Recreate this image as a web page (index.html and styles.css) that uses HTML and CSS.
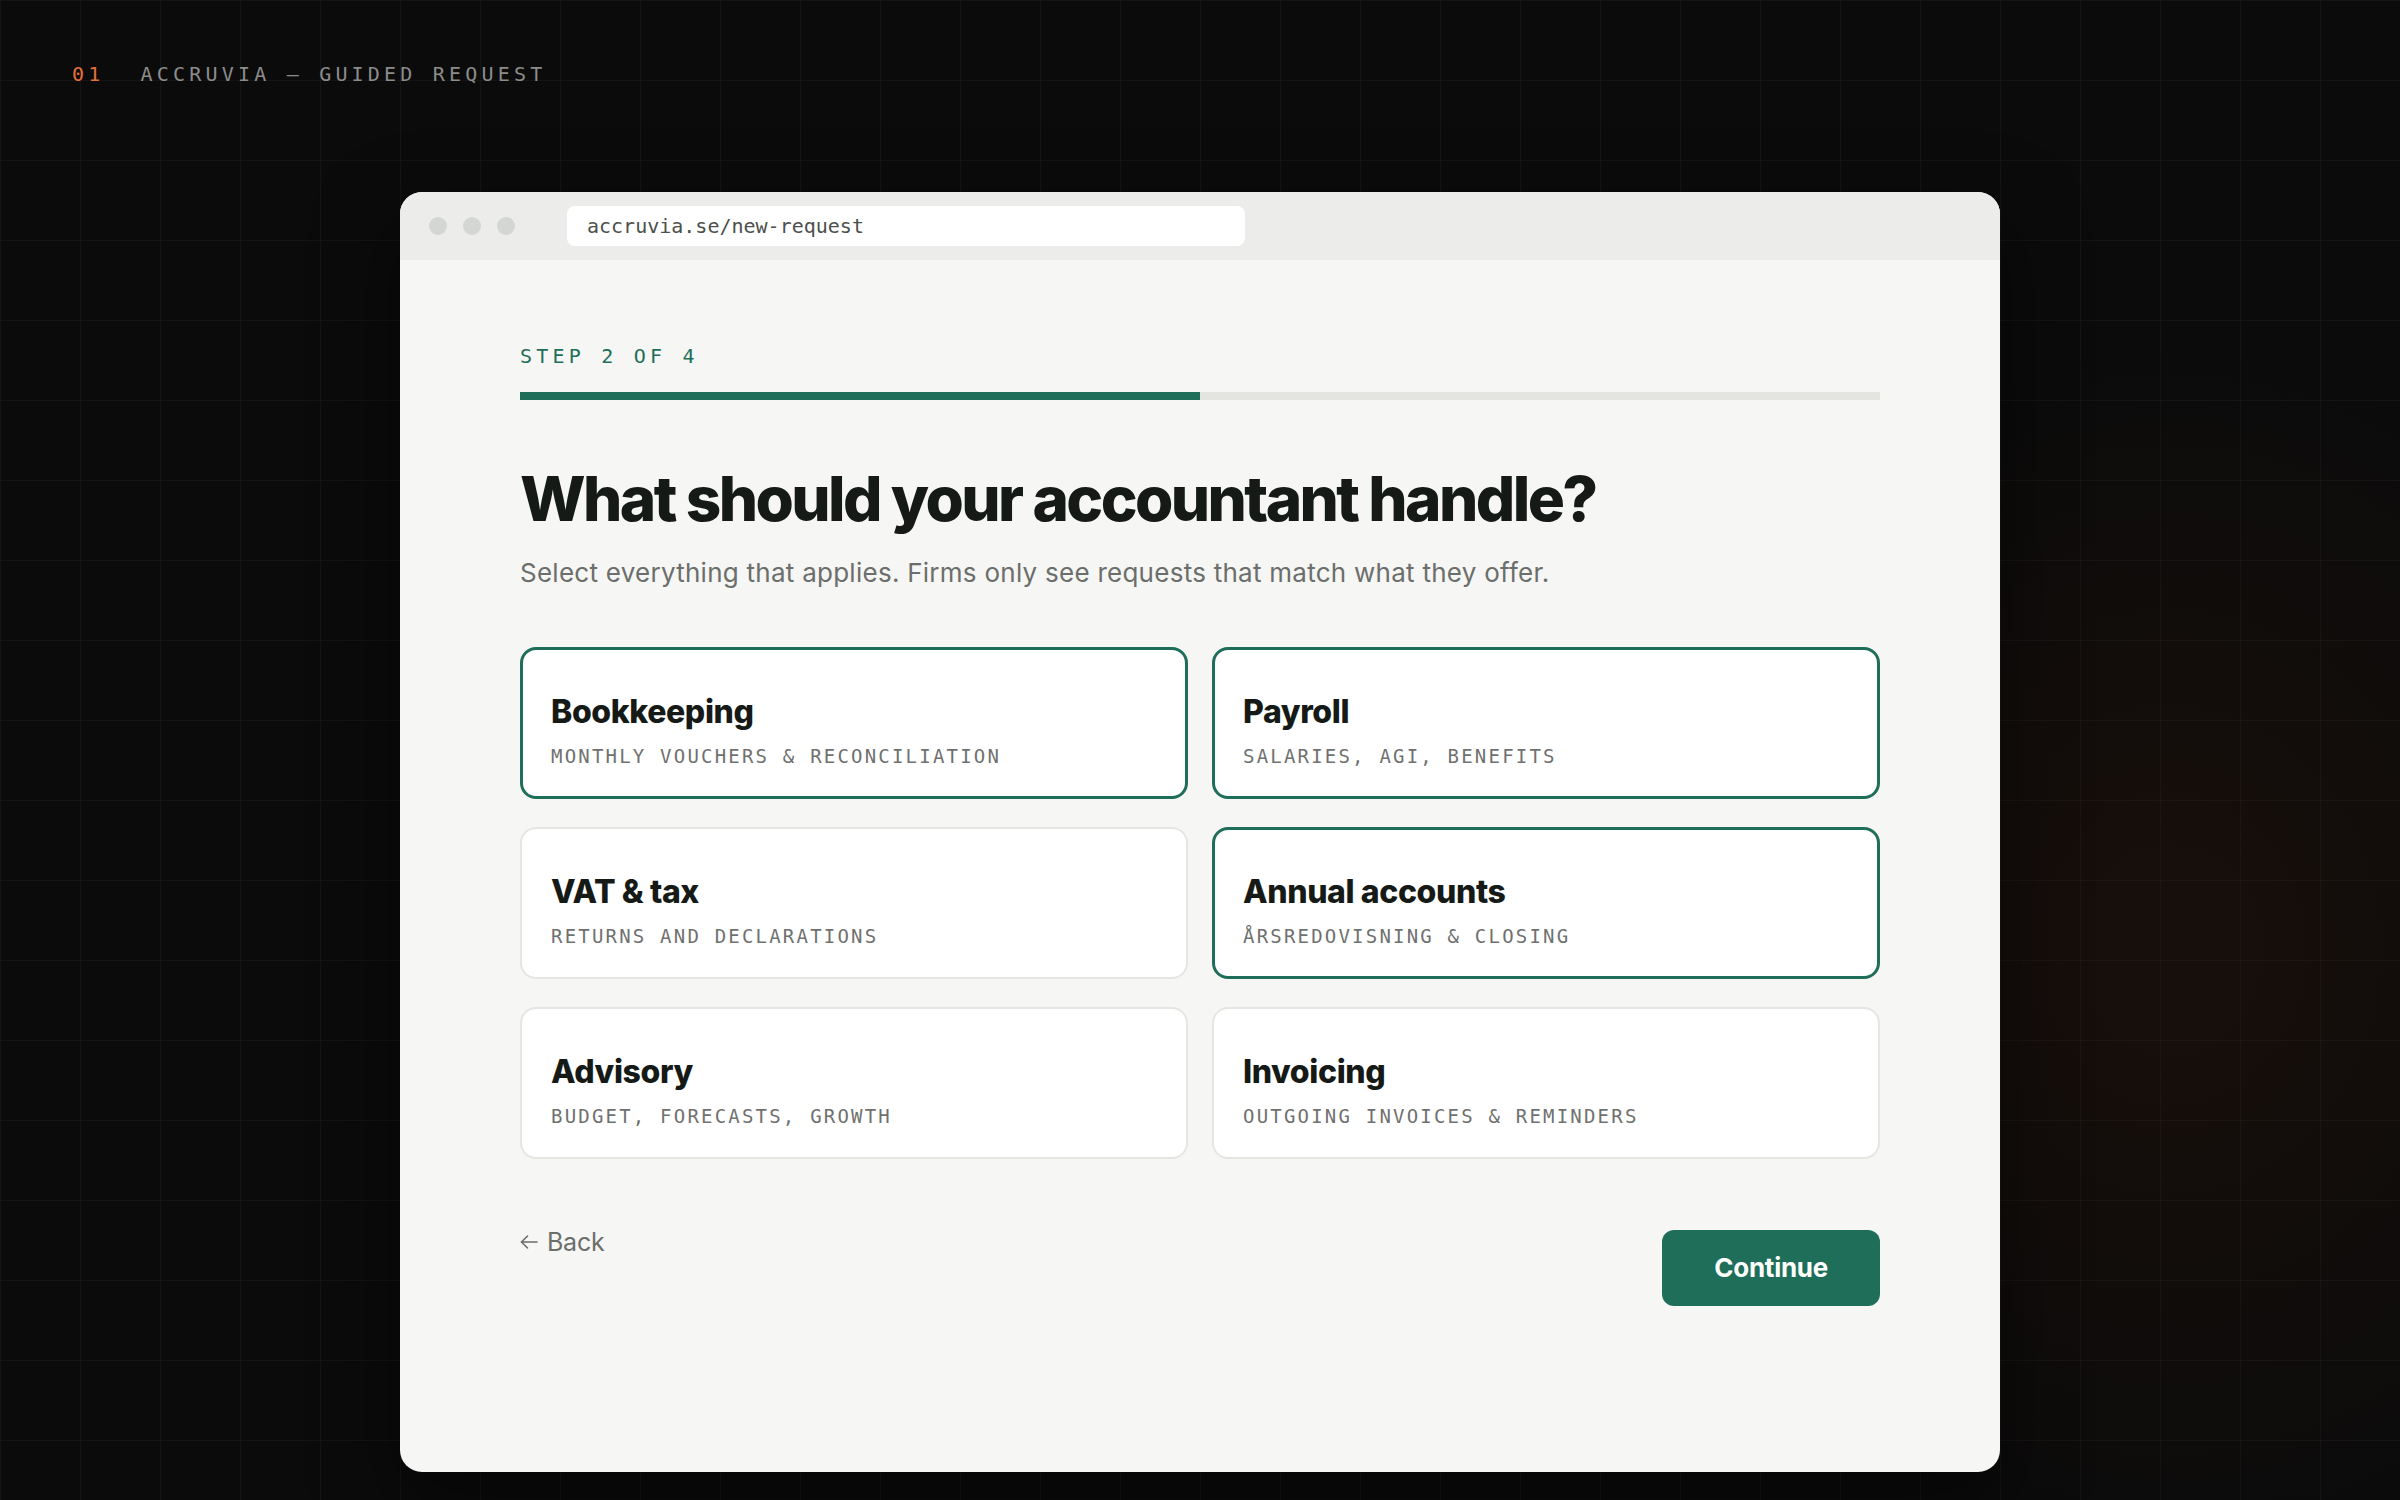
FILE: index.html
```html
<!DOCTYPE html>
<html lang="en">
<head>
    <meta charset="UTF-8">
    <meta name="viewport" content="width=device-width, initial-scale=1.0">
    <title>Accruvia - New request</title>
    <link rel="stylesheet" href="styles.css">
</head>
<body>
    <header class="topline">
        <span class="topline-num">01</span>
        <span class="topline-title">ACCRUVIA — GUIDED REQUEST</span>
    </header>

    <div class="browser">
        <div class="browser-bar">
            <div class="dots">
                <span class="dot"></span>
                <span class="dot"></span>
                <span class="dot"></span>
            </div>
            <div class="url">accruvia.se/new-request</div>
        </div>

        <main class="wizard">
            <div class="step-label">STEP 2 OF 4</div>
            <div class="progress">
                <div class="progress-fill" style="width: 50%"></div>
            </div>

            <h1 class="question">What should your accountant handle?</h1>
            <p class="hint">Select everything that applies. Firms only see requests that match what they offer.</p>

            <div class="options">
                <div class="option is-selected">
                    <div class="option-title">Bookkeeping</div>
                    <div class="option-sub">MONTHLY VOUCHERS &amp; RECONCILIATION</div>
                </div>
                <div class="option is-selected">
                    <div class="option-title">Payroll</div>
                    <div class="option-sub">SALARIES, AGI, BENEFITS</div>
                </div>
                <div class="option">
                    <div class="option-title">VAT &amp; tax</div>
                    <div class="option-sub">RETURNS AND DECLARATIONS</div>
                </div>
                <div class="option is-selected">
                    <div class="option-title">Annual accounts</div>
                    <div class="option-sub">ÅRSREDOVISNING &amp; CLOSING</div>
                </div>
                <div class="option">
                    <div class="option-title">Advisory</div>
                    <div class="option-sub">BUDGET, FORECASTS, GROWTH</div>
                </div>
                <div class="option">
                    <div class="option-title">Invoicing</div>
                    <div class="option-sub">OUTGOING INVOICES &amp; REMINDERS</div>
                </div>
            </div>

            <div class="wizard-footer">
                <a class="back" href="#">
                    <svg width="18" height="16" viewBox="0 0 18 16" fill="none" stroke="currentColor" stroke-width="1.6" stroke-linecap="round" stroke-linejoin="round">
                        <path d="M17 8H1.5"/>
                        <path d="M7.5 2L1.5 8l6 6"/>
                    </svg>
                    Back
                </a>
                <button class="continue" type="button">Continue</button>
            </div>
        </main>
    </div>
</body>
</html>
```

FILE: styles.css
```css
* {
    box-sizing: border-box;
}
body {
    margin: 0;
    min-height: 100vh;
    font-family: Inter, "Noto Sans", sans-serif;
    background-color: #0b0b0b;
    background-image:
        radial-gradient(ellipse 520px 600px at 2170px 950px, rgba(70, 30, 14, 0.22), transparent),
        linear-gradient(rgba(255, 255, 255, 0.035) 1px, transparent 1px),
        linear-gradient(90deg, rgba(255, 255, 255, 0.035) 1px, transparent 1px);
    background-size: auto, 80px 80px, 80px 80px;
    overflow: hidden;
}

/* slide label */
.topline {
    display: flex;
    align-items: center;
    padding: 62px 72px 0;
    height: 86px;
    font-family: "DejaVu Sans Mono", "Liberation Mono", monospace;
    font-size: 20px;
    line-height: 24px;
    letter-spacing: 4.2px;
}
.topline-num {
    color: #e3703a;
    margin-right: 36px;
}
.topline-title {
    color: #8c8c8a;
}

/* browser frame */
.browser {
    width: 1600px;
    height: 1280px;
    margin: 106px auto 0;
    background: #f6f6f4;
    border-radius: 22px;
    overflow: hidden;
    box-shadow: 0 30px 80px rgba(0, 0, 0, 0.5);
}
.browser-bar {
    height: 68px;
    background: #ecedea;
    display: flex;
    align-items: center;
    padding-left: 29px;
}
.dots {
    display: flex;
    gap: 16px;
}
.dot {
    width: 18px;
    height: 18px;
    border-radius: 50%;
    background: #d4d6d3;
}
.url {
    margin-left: 52px;
    width: 678px;
    height: 40px;
    background: #fff;
    border-radius: 8px;
    padding-left: 20px;
    display: flex;
    align-items: center;
    font-family: "DejaVu Sans Mono", "Liberation Mono", monospace;
    font-size: 20px;
    color: #4c4f4c;
}

/* wizard body */
.wizard {
    padding: 84px 120px 0;
}
.step-label {
    font-family: "DejaVu Sans Mono", "Liberation Mono", monospace;
    font-size: 20px;
    line-height: 24px;
    letter-spacing: 4.2px;
    color: #1e6e5a;
}
.progress {
    margin-top: 24px;
    height: 8px;
    background: #e4e4e1;
}
.progress-fill {
    height: 100%;
    background: #1e6e5a;
}
.question {
    margin: 65px 0 0;
    font-size: 62px;
    line-height: 1.1;
    font-weight: 800;
    letter-spacing: -0.042em;
    color: #161a17;
}
.hint {
    margin: 22px 0 0;
    font-size: 26px;
    line-height: 1.4;
    color: #6b6e6b;
    letter-spacing: 0.01em;
}

.options {
    margin-top: 55px;
    display: grid;
    grid-template-columns: 1fr 1fr;
    grid-auto-rows: 152px;
    column-gap: 24px;
    row-gap: 28px;
}
.option {
    background: #fff;
    border: 2px solid #e5e5e2;
    border-radius: 16px;
    padding: 45px 29px 0;
}
.option.is-selected {
    border: 3px solid #1e6e5a;
    padding: 44px 28px 0;
}
.option-title {
    font-size: 32px;
    line-height: 36px;
    font-weight: 800;
    letter-spacing: -0.012em;
    color: #161a17;
}
.option-sub {
    margin-top: 15px;
    font-family: "DejaVu Sans Mono", "Liberation Mono", monospace;
    font-size: 19px;
    line-height: 23px;
    letter-spacing: 2.2px;
    color: #6f716f;
}

.wizard-footer {
    margin-top: 71px;
    display: flex;
    justify-content: space-between;
    align-items: flex-start;
}
.back {
    display: flex;
    align-items: center;
    gap: 9px;
    font-size: 25px;
    line-height: 1;
    color: #6b6e6b;
    text-decoration: none;
    letter-spacing: -0.01em;
}
.continue {
    height: 76px;
    padding: 0 52px;
    border: none;
    border-radius: 12px;
    background: #1e6e5a;
    color: #fff;
    font-family: Inter, "Noto Sans", sans-serif;
    font-size: 26px;
    font-weight: 700;
    letter-spacing: -0.01em;
    cursor: pointer;
}
```
